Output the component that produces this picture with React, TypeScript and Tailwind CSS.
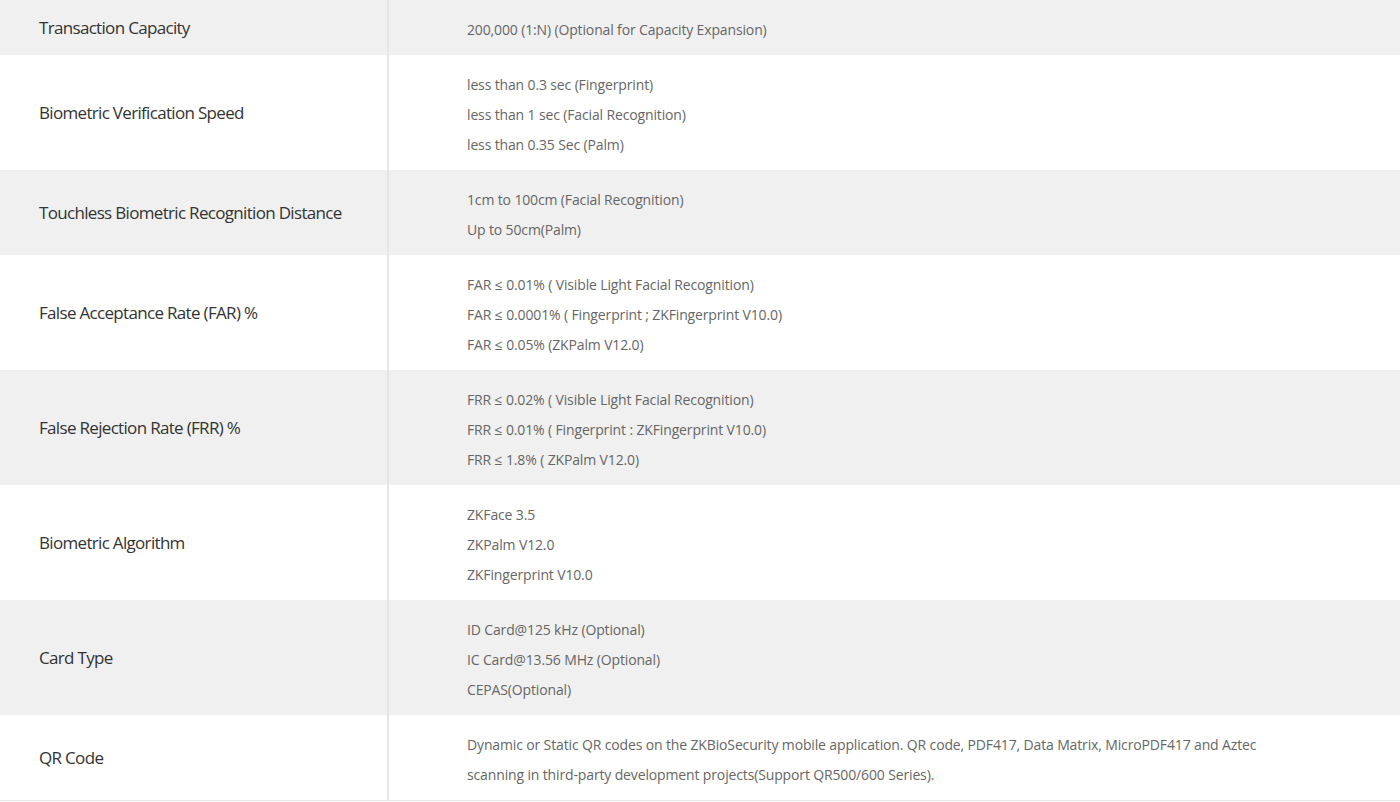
import React from "react";

type Row = { label: string; values: string[]; gray: boolean };

const rows: Row[] = [
  { label: "Transaction Capacity", values: ["200,000 (1:N) (Optional for Capacity Expansion)"], gray: true },
  {
    label: "Biometric Verification Speed",
    values: ["less than 0.3 sec (Fingerprint)", "less than 1 sec (Facial Recognition)", "less than 0.35 Sec (Palm)"],
    gray: false,
  },
  {
    label: "Touchless Biometric Recognition Distance",
    values: ["1cm to 100cm (Facial Recognition)", "Up to 50cm(Palm)"],
    gray: true,
  },
  {
    label: "False Acceptance Rate (FAR) %",
    values: [
      "FAR ≤ 0.01% ( Visible Light Facial Recognition)",
      "FAR ≤ 0.0001% ( Fingerprint ; ZKFingerprint V10.0)",
      "FAR ≤ 0.05% (ZKPalm V12.0)",
    ],
    gray: false,
  },
  {
    label: "False Rejection Rate (FRR) %",
    values: [
      "FRR ≤ 0.02% ( Visible Light Facial Recognition)",
      "FRR ≤ 0.01% ( Fingerprint : ZKFingerprint V10.0)",
      "FRR ≤ 1.8% ( ZKPalm V12.0)",
    ],
    gray: true,
  },
  { label: "Biometric Algorithm", values: ["ZKFace 3.5", "ZKPalm V12.0", "ZKFingerprint V10.0"], gray: false },
  {
    label: "Card Type",
    values: ["ID Card@125 kHz (Optional)", "IC Card@13.56 MHz (Optional)", "CEPAS(Optional)"],
    gray: true,
  },
  {
    label: "QR Code",
    values: [
      "Dynamic or Static QR codes on the ZKBioSecurity mobile application. QR code, PDF417, Data Matrix, MicroPDF417 and Aztec scanning in third-party development projects(Support QR500/600 Series).",
    ],
    gray: false,
  },
];

export default function App() {
  return (
    <div className="w-[1400px] bg-white font-['Open_Sans',sans-serif]">
      <div className="border-b border-[#e8e8e8]">
        {rows.map((r, i) => (
          <div key={i} className={`flex ${r.gray ? "bg-[#f0f0f0]" : "bg-white"}`}>
            <div className="w-[389px] shrink-0 border-r-2 border-[#e6e6e6] pl-[39px] flex items-center text-[17px] tracking-[-0.04em] text-[#333]">
              {r.label}
            </div>
            <div className="flex-1 pl-[78px] pr-[110px] pt-[15px] pb-[10px] text-[14px] leading-[30px] tracking-[-0.01em] text-[#666]">
              {r.values.map((v, j) => (
                <div key={j}>{v}</div>
              ))}
            </div>
          </div>
        ))}
      </div>
    </div>
  );
}
